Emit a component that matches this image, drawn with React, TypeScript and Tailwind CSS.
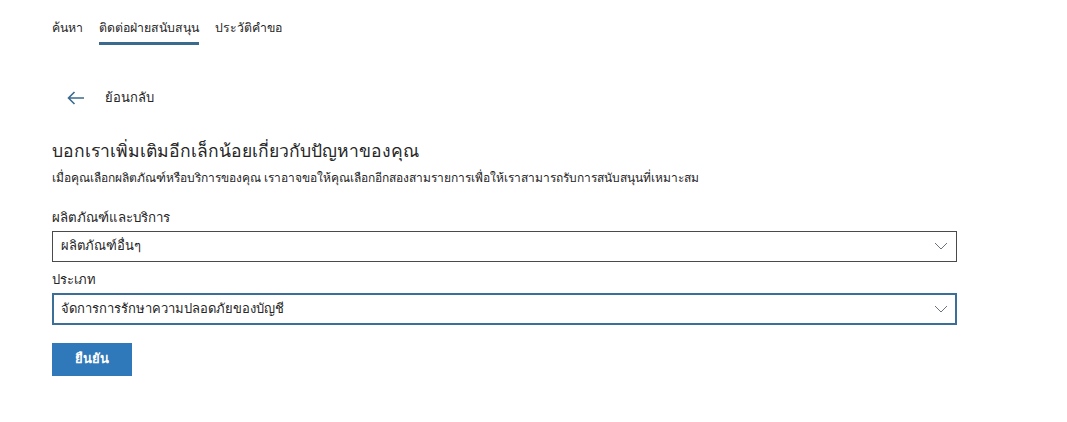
import React from 'react';

const FONT = { fontFamily: '"Noto Sans", "Liberation Sans", sans-serif' };

function Chevron() {
  return (
    <svg width="14" height="8" viewBox="0 0 14 8" fill="none" className="text-gray-500">
      <path d="M1 1l6 6 6-6" stroke="currentColor" strokeWidth="1" />
    </svg>
  );
}

export default function App() {
  return (
    <div className="min-h-screen bg-white text-[#262626]" style={FONT}>
      {/* Top nav */}
      <nav className="flex gap-[16px] pl-[52px] pt-[18px] text-[12.3px] leading-[20px]">
        <a className="pb-[4px] border-b-[3px] border-transparent">ค้นหา</a>
        <a className="pb-[4px] border-b-[3px] border-[#3b6a8f]">ติดต่อฝ่ายสนับสนุน</a>
        <a className="pb-[4px] border-b-[3px] border-transparent">ประวัติคำขอ</a>
      </nav>

      <div className="pl-[52px] pr-[110px]">
        {/* Back */}
        <div className="flex items-center gap-[20px] mt-[43px] pl-[15px] text-[13px]">
          <svg width="18" height="14" viewBox="0 0 18 14" fill="none">
            <path d="M17 7H1.5M7.5 1L1.5 7l6 6" stroke="#3b6a8f" strokeWidth="1.6" />
          </svg>
          <span>ย้อนกลับ</span>
        </div>

        <h1 className="mt-[29px] text-[17.5px] leading-[26px]">บอกเราเพิ่มเติมอีกเล็กน้อยเกี่ยวกับปัญหาของคุณ</h1>
        <p className="mt-[6px] text-[12px]">
          เมื่อคุณเลือกผลิตภัณฑ์หรือบริการของคุณ เราอาจขอให้คุณเลือกอีกสองสามรายการเพื่อให้เราสามารถรับการสนับสนุนที่เหมาะสม
        </p>

        <label className="block mt-[20px] text-[13.3px] leading-[20px]">ผลิตภัณฑ์และบริการ</label>
        <div className="mt-[4px] h-[31px] border border-[#4a4a4a] flex items-center justify-between px-[8px] text-[13px]">
          <span>ผลิตภัณฑ์อื่นๆ</span>
          <Chevron />
        </div>

        <label className="block mt-[7px] text-[13px] leading-[20px]">ประเภท</label>
        <div className="mt-[4px] h-[32px] border-2 border-[#3b6f97] flex items-center justify-between px-[7px] text-[13px]">
          <span>จัดการการรักษาความปลอดภัยของบัญชี</span>
          <Chevron />
        </div>

        <button className="mt-[18px] w-[80px] h-[33px] bg-[#2f78b9] text-white text-[13px] font-semibold">ยืนยัน</button>
      </div>
    </div>
  );
}
